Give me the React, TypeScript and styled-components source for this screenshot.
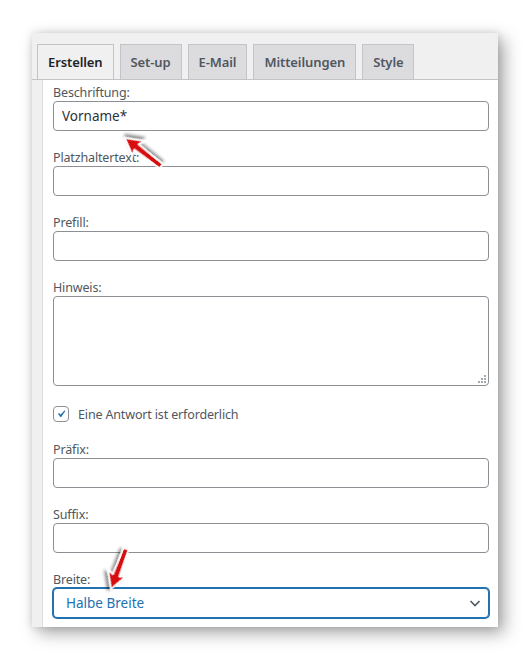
import React from 'react';
import styled, { createGlobalStyle } from 'styled-components';

const GlobalStyle = createGlobalStyle`
  html, body {
    margin: 0;
    padding: 0;
    background: #ffffff;
  }
  body {
    font-family: "Noto Sans", "Open Sans", "Liberation Sans", sans-serif;
  }
`;

const Page = styled.div`
  position: relative;
  width: 531px;
  height: 659px;
  padding: 33px 0 0 32px;
  box-sizing: border-box;
`;

const Window = styled.div`
  width: 466px;
  height: 594px;
  background: #f0f0f1;
  display: flex;
  flex-direction: column;
  overflow: hidden;
  box-shadow: 6px 6px 16px rgba(0, 0, 0, 0.35), 0 0 8px rgba(0, 0, 0, 0.12);
`;

const TabBar = styled.div`
  display: flex;
  gap: 6px;
  padding: 11px 0 0 5px;
  border-bottom: 1px solid #c3c4c7;
`;

const Tab = styled.div<{ active?: boolean }>`
  height: 34px;
  padding: 0 10px;
  display: flex;
  align-items: center;
  border: 1px solid #c3c4c7;
  border-bottom: none;
  background: ${(p) => (p.active ? '#f0f0f1' : '#dcdcde')};
  color: ${(p) => (p.active ? '#1d2327' : '#50575e')};
  font-size: 13px;
  font-weight: 600;
  letter-spacing: -0.1px;
`;

const Body = styled.div`
  flex: 1;
  display: flex;
  margin-left: 10px;
  background: #ffffff;
  border-left: 1px solid #dcdcde;
`;

const Form = styled.div`
  flex: 1;
  display: flex;
  flex-direction: column;
  padding: 5px 9px 0 10px;
`;

const Field = styled.div`
  display: flex;
  flex-direction: column;
  margin-bottom: 19px;
  &:last-child {
    margin-bottom: 0;
  }
`;

const Label = styled.label`
  height: 16px;
  line-height: 16px;
  font-size: 12.5px;
  color: #50575e;
  letter-spacing: -0.15px;
`;

const TextInput = styled.input`
  box-sizing: border-box;
  height: 30px;
  width: 100%;
  margin: 0;
  padding: 0 8px;
  border: 1px solid #8c8f94;
  border-radius: 4px;
  background: #ffffff;
  font-family: inherit;
  font-size: 13.5px;
  color: #2c3338;
  outline: none;
`;

const AreaWrap = styled.div`
  position: relative;
  display: flex;
`;

const TextArea = styled.textarea`
  box-sizing: border-box;
  height: 90px;
  width: 100%;
  margin: 0;
  padding: 6px 8px;
  border: 1px solid #8c8f94;
  border-radius: 4px;
  background: #ffffff;
  font-family: inherit;
  font-size: 13.5px;
  resize: none;
  outline: none;
`;

const Grip = styled.svg`
  position: absolute;
  right: 3px;
  bottom: 3px;
  pointer-events: none;
`;

const CheckRow = styled.div`
  display: flex;
  align-items: center;
  gap: 9px;
  height: 18px;
  margin-bottom: 19px;
  font-size: 12.5px;
  color: #50575e;
  letter-spacing: -0.15px;
`;

const CheckBox = styled.span`
  box-sizing: border-box;
  width: 16px;
  height: 16px;
  border: 1px solid #8c8f94;
  border-radius: 4px;
  background: #ffffff;
  display: flex;
  align-items: center;
  justify-content: center;
`;

const SelectWrap = styled.div`
  position: relative;
  display: flex;
`;

const Select = styled.select`
  box-sizing: border-box;
  appearance: none;
  height: 30px;
  width: 100%;
  margin: 0;
  padding: 0 24px 0 12px;
  border: 1px solid #2271b1;
  border-radius: 4px;
  box-shadow: 0 0 0 1px #2271b1;
  background: #ffffff;
  font-family: inherit;
  font-size: 13.5px;
  color: #2271b1;
  outline: none;
`;

const Chevron = styled.svg`
  position: absolute;
  right: 8px;
  top: 9px;
  pointer-events: none;
`;

const Overlay = styled.svg`
  position: absolute;
  left: 0;
  top: 0;
  pointer-events: none;
`;

const tabs = ['Erstellen', 'Set-up', 'E-Mail', 'Mitteilungen', 'Style'];

const textFields = ['Beschriftung:', 'Platzhaltertext:', 'Prefill:'];

function Arrow({ x, y, angle, length }: { x: number; y: number; angle: number; length: number }) {
  const L = length;
  const points = `0,0 -17,-9.5 -14.5,-3.4 ${-L},-2.6 ${-L},2.6 -14.5,3.4 -17,9.5`;
  return (
    <g transform={`translate(${x} ${y}) rotate(${angle})`} filter="url(#arrowShadow)">
      <polygon points={points} fill="#d8070d" stroke="#ffffff" strokeWidth="1.8" strokeLinejoin="round" />
    </g>
  );
}

export default function App() {
  return (
    <>
      <GlobalStyle />
      <Page>
        <Window>
          <TabBar>
            {tabs.map((t, i) => (
              <Tab key={t} active={i === 0}>
                {t}
              </Tab>
            ))}
          </TabBar>
          <Body>
            <Form>
              {textFields.map((label, i) => (
                <Field key={label}>
                  <Label>{label}</Label>
                  <TextInput defaultValue={i === 0 ? 'Vorname*' : ''} />
                </Field>
              ))}
              <Field>
                <Label>Hinweis:</Label>
                <AreaWrap>
                  <TextArea />
                  <Grip width="8" height="8" viewBox="0 0 8 8">
                    <g fill="#a7aaad">
                      <rect x="6" y="0" width="2" height="2" />
                      <rect x="3" y="3" width="2" height="2" />
                      <rect x="6" y="3" width="2" height="2" />
                      <rect x="0" y="6" width="2" height="2" />
                      <rect x="3" y="6" width="2" height="2" />
                      <rect x="6" y="6" width="2" height="2" />
                    </g>
                  </Grip>
                </AreaWrap>
              </Field>
              <CheckRow>
                <CheckBox>
                  <svg width="14" height="14" viewBox="0 0 20 20">
                    <path d="M14.83 4.89l1.34.94-5.81 8.38H9.02L5.78 9.67l1.34-1.25 2.57 2.4z" fill="#2271b1" />
                  </svg>
                </CheckBox>
                Eine Antwort ist erforderlich
              </CheckRow>
              <Field>
                <Label>Präfix:</Label>
                <TextInput />
              </Field>
              <Field>
                <Label>Suffix:</Label>
                <TextInput />
              </Field>
              <Field>
                <Label>Breite:</Label>
                <SelectWrap>
                  <Select defaultValue="half">
                    <option value="half">Halbe Breite</option>
                    <option value="full">Volle Breite</option>
                  </Select>
                  <Chevron width="12" height="12" viewBox="0 0 12 12">
                    <path d="M1.5 4l4.5 4.5L10.5 4" fill="none" stroke="#50575e" strokeWidth="1.6" />
                  </Chevron>
                </SelectWrap>
              </Field>
            </Form>
          </Body>
        </Window>
        <Overlay width="531" height="659">
          <defs>
            <filter id="arrowShadow" x="-50%" y="-50%" width="200%" height="200%">
              <feDropShadow dx="2" dy="2.5" stdDeviation="1.6" floodColor="#000" floodOpacity="0.45" />
            </filter>
          </defs>
          <Arrow x={125} y={138} angle={218} length={46} />
          <Arrow x={111} y={589} angle={110.6} length={43} />
        </Overlay>
      </Page>
    </>
  );
}
